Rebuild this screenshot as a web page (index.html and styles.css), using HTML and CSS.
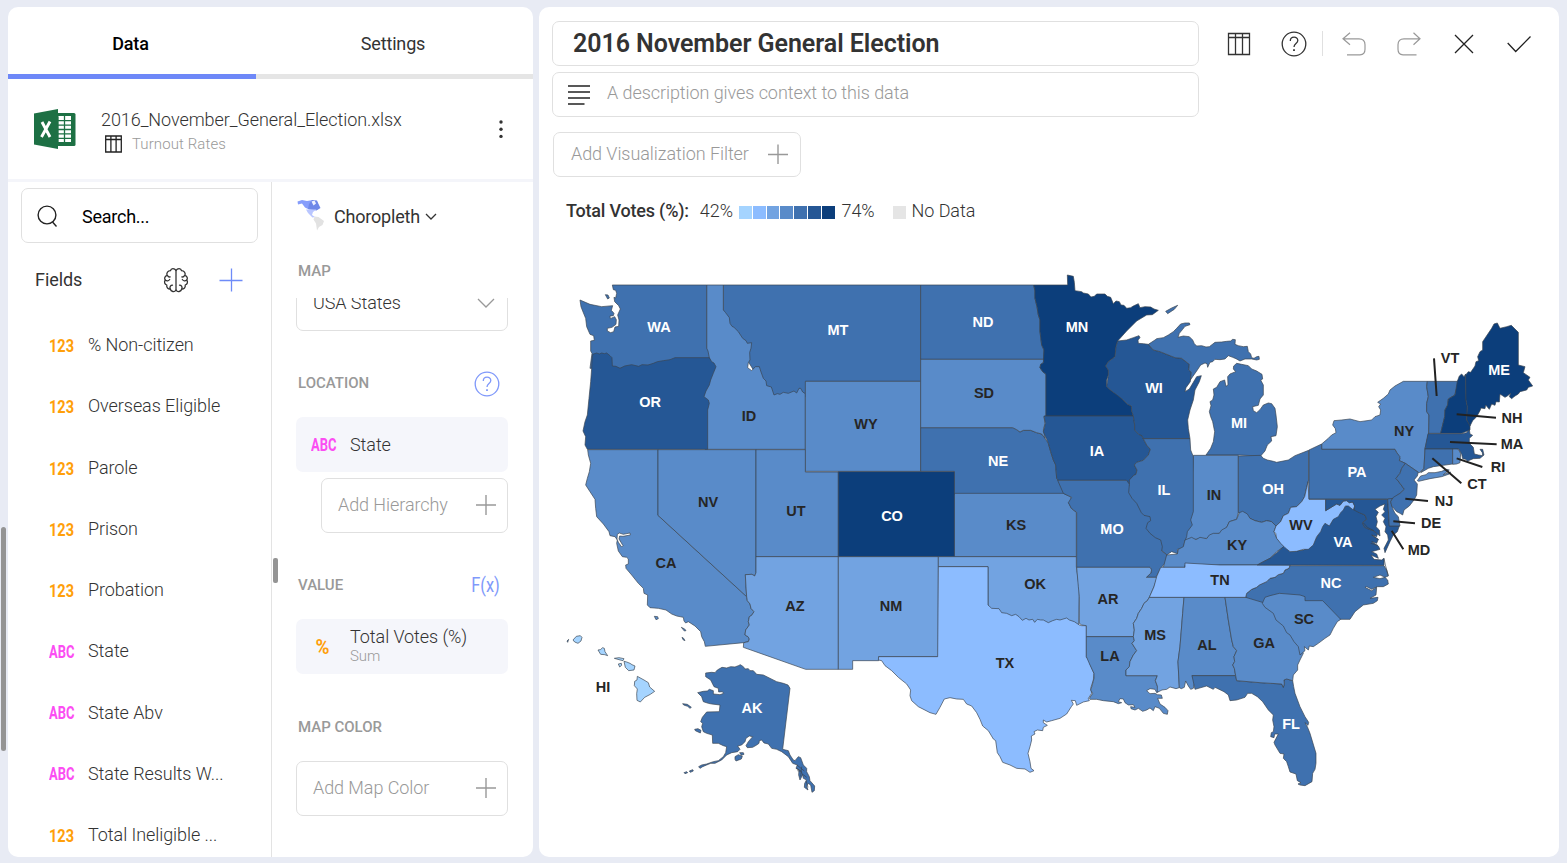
FILE: index.html
```html
<!DOCTYPE html>
<html lang="en">
<head>
<meta charset="utf-8">
<title>2016 November General Election</title>
<link rel="stylesheet" href="styles.css">
</head>
<body>
<div class="page-scroll"></div>
<div class="app">
  <aside class="side">
    <nav class="tabs">
      <div class="tab tab-active">Data</div>
      <div class="tab">Settings</div>
    </nav>
    <section class="source">
      <svg class="excel" width="42" height="40" viewBox="0 0 42 40">
        <rect x="20" y="4" width="21.5" height="33" rx="1.5" fill="#1d7044"/>
        <path d="M24 7h13v26H24z" fill="#fff"/>
        <path d="M24 7.200v26M30.500 7v26M24 11.700h13.500M24 16.100h13.500M24 20.500h13.500M24 24.900h13.500M24 29.300h13.500" stroke="#1d7044" stroke-width="1.300"/>
        <path d="M0 4.500 24 0v40L0 35.500z" fill="#1d7044"/>
        <path d="M8 13l8 15M16 12.500 7.500 28" stroke="#fff" stroke-width="2.900"/>
      </svg>
      <div class="source-text">
        <div class="source-name">2016_November_General_Election.xlsx</div>
        <div class="source-sheet">
          <svg width="17" height="18" viewBox="0 0 17 18" fill="none" stroke="#222" stroke-width="1.300"><path d="M.7 1h15.600v16H.7zM.7 4.500h15.600M5.900 1v16M11.100 1v16"/></svg>
          <span>Turnout Rates</span>
        </div>
      </div>
      <svg class="more" width="6" height="20" viewBox="0 0 6 20" fill="#333"><circle cx="3" cy="3" r="1.700"/><circle cx="3" cy="10.200" r="1.700"/><circle cx="3" cy="17.400" r="1.700"/></svg>
    </section>
    <div class="columns">
      <section class="fields">
        <div class="search">
          <svg width="22" height="24" viewBox="0 0 22 24" fill="none" stroke="#222" stroke-width="1.400"><circle cx="10" cy="11" r="8.900"/><path d="M15.500 18l4 4.500"/></svg>
          <span>Search...</span>
        </div>
        <div class="fields-head">
          <span>Fields</span>
          <svg class="brain" width="26" height="26" viewBox="0 0 26 26" fill="none" stroke="#333" stroke-width="1.300" stroke-linecap="round" stroke-linejoin="round">
            <path d="M13 3v20M13 3.500C11.500 1 8 1 7.500 3.700 4.800 3.800 3.300 6 4 8.300 1.700 9.200 1 11.500 2.300 13 .8 15 1.600 17.300 3.800 18c-.5 2.500 1.200 4 3.400 4C8 24.800 11.500 25.500 13 23"/>
            <path d="M13 3.500C14.500 1 18 1 18.500 3.700c2.700.1 4.200 2.300 3.500 4.600 2.300.9 3 3.200 1.700 4.700 1.500 2 .7 4.300-1.500 5 .5 2.500-1.200 4-3.400 4-.8 2.800-4.300 3.500-5.800 1"/>
            <path d="M4.500 8.500c.5 1.200 1.600 1.700 2.700 1.400M2.500 13.200c1.300 1 3.200.8 4.200-.7M7.200 22c-.8-2 .3-3.800 2.300-3.800M21.500 8.500c-.5 1.200-1.600 1.700-2.700 1.400M23.500 13.200c-1.300 1-3.200.8-4.200-.7M18.800 22c.8-2-.3-3.800-2.300-3.800"/>
          </svg>
          <svg class="add" width="24" height="24" viewBox="0 0 24 24" stroke="#6e8bf8" stroke-width="1.300"><path d="M.5 12.500h23M12.500 .5v23"/></svg>
        </div>
        <ul class="field-list">
          <li><b class="num">123</b><span>% Non-citizen</span></li>
          <li><b class="num">123</b><span>Overseas Eligible</span></li>
          <li><b class="num">123</b><span>Parole</span></li>
          <li><b class="num">123</b><span>Prison</span></li>
          <li><b class="num">123</b><span>Probation</span></li>
          <li><b class="abc">ABC</b><span>State</span></li>
          <li><b class="abc">ABC</b><span>State Abv</span></li>
          <li><b class="abc">ABC</b><span>State Results W...</span></li>
          <li><b class="num">123</b><span>Total Ineligible ...</span></li>
        </ul>
      </section>
      <section class="config">
        <div class="grip"></div>
        <div class="viz-type">
          <svg width="28" height="32" viewBox="0 0 28 32">
            <path d="M.5 2.500 5 1l5 1 6-1 4 2 2 4-2 4-8-.5-4-2-3-4-4 1z" fill="#869dfb"/>
            <path d="M12 5l3-4 5 .5 1.500 3.500 2 4-4 2.500L11 10z" fill="#6f88e8"/>
            <path d="M14.500 2.500l3-1 1.500 3-2.500 2z" fill="#eef1ff"/>
            <path d="M9 10.500h10.500L16 13l-1 3 3 2-2.500.5L11 14z" fill="#b9c6ff"/>
            <path d="M17.500 17.500l4 .5 5.500 4-1.500 4-3.500 2-2 3.500-1-7-2.500-4z" fill="#e2e2e2"/>
          </svg>
          <span>Choropleth</span>
          <svg class="caret" width="12" height="8" viewBox="0 0 12 8" fill="none" stroke="#333" stroke-width="1.300"><path d="M1 1l5 5 5-5"/></svg>
        </div>
        <h3 class="label-map">MAP</h3>
        <div class="config-scroll">
          <div class="box select"><span>USA States</span><svg width="18" height="10" viewBox="0 0 18 10" fill="none" stroke="#999" stroke-width="1.300"><path d="M1 1l8 8 8-8"/></svg></div>
          <div class="section-head location"><h3>LOCATION</h3>
            <svg width="26" height="26" viewBox="0 0 26 26" fill="none" stroke="#7f98fa" stroke-width="1.300"><circle cx="13" cy="13" r="11.800"/><path d="M9.300 10c0-5 7.500-5 7.500-.5 0 3-3.800 3.200-3.800 6.500"/><path d="M13 18.200v1.800" stroke-width="1.800"/></svg>
          </div>
          <div class="pill"><b class="abc">ABC</b><span>State</span></div>
          <div class="box hierarchy"><span>Add Hierarchy</span><svg class="plus" width="20" height="20" viewBox="0 0 20 20"><path d="M0 10h20M10 0v20"/></svg></div>
          <div class="section-head value"><h3>VALUE</h3><span class="fx">F(x)</span></div>
          <div class="pill"><b class="pct">%</b><div class="measure"><span>Total Votes (%)</span><small>Sum</small></div></div>
          <div class="section-head color"><h3>MAP COLOR</h3></div>
          <div class="box"><span>Add Map Color</span><svg class="plus" width="20" height="20" viewBox="0 0 20 20"><path d="M0 10h20M10 0v20"/></svg></div>
        </div>
      </section>
    </div>
  </aside>

  <main class="main">
    <header class="header">
      <div class="inputs">
        <div class="title">2016 November General Election</div>
        <div class="description">
          <svg width="22" height="20" viewBox="0 0 22 20" stroke="#222" stroke-width="1.500"><path d="M0 1h22M0 7h22M0 13h22M0 19h16.500"/></svg>
          <span>A description gives context to this data</span>
        </div>
      </div>
      <div class="toolbar">
        <div class="tool"><svg width="24" height="24" viewBox="0 0 24 24" stroke="#333" stroke-width="1.300"><path d="M1.500 1.500h21v21h-21zM1.500 5.500h21M8.500 1.500v21M15.500 1.500v21"/></svg></div>
        <div class="tool"><svg width="26" height="26" viewBox="0 0 26 26" stroke="#333" stroke-width="1.300"><circle cx="13" cy="13" r="11.800"/><path d="M9.300 10c0-5 7.500-5 7.500-.5 0 3-3.800 3.200-3.800 6.500"/><path d="M13 18.200v1.800" stroke-width="1.800"/></svg></div>
        <i class="divider"></i>
        <div class="tool"><svg width="24" height="24" viewBox="0 0 24 24" stroke="#999" stroke-width="1.200"><path d="M8 .8 1 6.800l7 6M1 6.800h16c4 0 6 2.200 6 6v4.500c0 4-2 5.500-5 5.500H5"/></svg></div>
        <div class="tool"><svg width="24" height="24" viewBox="0 0 24 24" stroke="#999" stroke-width="1.200"><path d="M16.500 .8l6.500 6-6.500 6M23 6.800H7c-4 0-6 2.200-6 6v4.500c0 4 2 5.500 5 5.500h13.500"/></svg></div>
        <div class="tool"><svg width="20" height="20" viewBox="0 0 20 20" stroke="#222" stroke-width="1.300"><path d="M1 1l18 18M19 1L1 19"/></svg></div>
        <div class="tool"><svg width="24" height="18" viewBox="0 0 24 18" stroke="#222" stroke-width="1.300"><path d="M.7 8l8 8.500L23.500 1.500"/></svg></div>
      </div>
    </header>
    <div class="filter"><span>Add Visualization Filter</span><svg class="plus" width="20" height="20" viewBox="0 0 20 20"><path d="M0 10.500h20M10 .5v20"/></svg></div>
    <div class="legend">
      <b>Total Votes (%):</b>
      <span class="legend-min">42%</span>
      <div class="swatches"><i class="s1"></i><i class="s2"></i><i class="s3"></i><i class="s4"></i><i class="s5"></i><i class="s6"></i><i class="s7"></i></div>
      <span class="legend-max">74%</span>
      <i class="nodata"></i>
      <span>No Data</span>
    </div>
    <svg class="map" width="1020" height="617" viewBox="539 240 1020 617">
      <!-- Northwest -->
      <g transform="translate(570 265) scale(.33333)">
        <path class="c5" d="M460 60H1052V349H707V395H600L460 170Z"/>
        <path class="c4" d="M410 60H460V135L466 142 478 158 480 175 486 184 492 187 505 200 518 220 528 227 532 235 545 233 543 250 539 262 540 285 535 293 533 308 545 317 556 305 568 305 572 318 580 340 588 348 590 362 604 366 612 390 622 386 630 388 640 382 655 385 672 378 680 384 687 370 692 370 698 381 706 386V553H405L395 400 410 270Z"/>
        <path class="c5" d="M127 60H410V250L414 258 418 278 425 310H60L66 265 62 258 62 228 73 226 71 212 60 208 50 185 47 160 38 138 33 125 30 105 60 118 95 125 128 122 124 136 132 145 130 152 120 153 121 161 134 155 139 164 138 178 126 187 112 190 112 198 122 203 131 200 135 186 146 184 147 165 143 150 151 132 146 122 134 110 132 97 137 99 140 85 137 76 130 74Z"/>
        <path class="c5" d="M106 89l8 1 4 9-5 3z"/>
        <path class="c6" d="M68 268L80 264 88 267 95 264 103 266 110 264 120 272 126 278 127 303 138 304 150 310 164 303 185 299 206 304 216 299 234 300 250 295 262 290 280 287 300 284 315 278H418L425 290 432 294 438 305 430 325 422 345 418 360 408 378 402 395 415 405 418 415 413 435V553H52L45 540 47 515 39 498 45 470 52 450 57 400 62 350 65 310 66 285Z"/>
        <path class="c4" d="M706 349H1052V619H706Z"/>
      </g>
      <!-- West -->
      <g transform="translate(560 440) scale(.33333)">
        <path class="c4" d="M83 29H294V226L560 470 562 482 570 492 573 505 582 515 575 526 568 530 565 545 568 555 557 570 555 585 564 590 568 597 565 605 551 608 436 619 433 605 425 590 422 575 405 558 385 545 377 549 372 543 370 532 350 528 335 522 318 510 295 505 270 503 262 495 263 465 252 460 250 445 235 430 215 405 198 385 197 375 205 372 205 357 200 352 187 350 175 333 170 310 172 300 165 290 150 287 147 275 130 252 110 230 107 205 105 178 90 155 77 135 82 115 88 95 92 70 85 45Z"/>
        <path class="water" d="M172 283l6-4 12 4 20-4 1 6-22 4-10-1-2 9 12 20-4 4-10-14-4-10z"/>
        <path class="c4" d="M283 529l10 1 2 6-7 3zM364 562l10 5 4 5-5 1zM366 592l5 3 4 7-6-3zM21 603l5-5-3 9z"/>
        <path class="c4" d="M294 29H588V398L584 408 576 403 556 404 558 440 560 470 294 226Z"/>
        <path class="c4" d="M588 29H736V96H835V350H588Z"/>
        <path class="c3" d="M588 350H835V688H737L550 622 551 608 565 605 568 597 564 590 555 585 557 570 568 555 565 545 568 530 575 526 582 515 573 505 570 492 562 482 560 470 558 440 556 404 576 403 584 408 588 398Z"/>
        <path class="c5" d="M437 699L455 697 465 698 472 690 486 682 500 684 512 680 525 681 535 677 541 674 550 680 555 687 565 686 570 692 580 692 590 703 610 705 650 725 670 730 684 735 690 745 668 928 685 932 690 945 700 960 705 962 715 950 722 953 730 975 740 985 740 995 748 1010 750 1022 764 1038 763 1052 756 1057 752 1035 744 1030 740 1038 744 1050 733 1042 734 1030 740 1020 730 1015 728 1004 720 1020 716 1005 717 990 708 985 712 975 698 970 685 950 665 935 650 928 635 925 625 912 612 909 605 900 598 902 597 910 590 915 578 922 562 923 558 917 565 905 578 890 568 888 558 895 555 905 545 915 533 918 540 928 533 935 515 938 500 945 485 960 465 970 452 970 440 975 428 980 420 985 416 980 425 975 440 972 460 965 475 962 490 950 497 938 500 920 490 917 475 910 458 910 457 885 440 880 430 875 425 860 428 850 422 845 427 832 440 816 478 815 480 795 455 792 445 790 430 785 425 770 413 758 430 754 442 753 448 748 460 752 460 762 480 764 491 760 487 755 476 756 475 745 462 740 452 720 437 710Z"/>
        <path class="c5" d="M368 791l14 2 12 9-4 3-7-6-12-4zM404 868l10-2 9 5-2 8-15-7zM525 950l10-6 12 5-3 8-16 6-3-5zM539 938l11 0 2 5-8 3zM388 993l10-4 2 4-9 4zM372 998l8-3 3 3-8 3z"/>
        <path class="inlets" d="M711 975l12 10 10 8M709 985l14 8 5 12M712 992l10 2M725 980l-3 30M730 1004l10 8M738 1022l6 20"/>
        <path class="c1" d="M39 600l10-11 12-2 5 5-3 11-9 7-10-4zM114 630l7-1 7-6 5 2 2 10 8 12-9-3-12-1zM163 655l14-2 15 3-3 6-12-3zM175 672l9-2 1 6-6 5zM192 664l8 2 10 4 6 4 9 4-3 12-16 2-10-10zM232 709l20 11 13 8 4 13 15 13-13 9-17 9-13 14-10-5-1-20 2-14-9-10 1-13 7-4z"/>
      </g>
      <!-- Upper midwest -->
      <g transform="translate(860 265) scale(.33333)">
        <path class="c5" d="M182 60H521L525 78 525 100 531 125 535 150 540 165 540 200 545 240 552 255V283H182Z"/>
        <path class="c5" d="M182 488H458L470 494 480 501 490 496 512 496 530 503 545 507 555 520 565 535 572 560 580 585 587 600 590 640 600 655 608 672 622 688H283V619H182Z"/>
        <path class="c4" d="M182 283H552L550 293 542 298 540 308 548 320 558 328V453L552 455 555 475 550 495 556 520 545 507 530 503 512 496 490 496 480 501 470 494 458 488H182Z"/>
        <path class="c7" d="M521 60H623L622 30 640 34 643 52 645 77 665 80 670 84 685 87 693 96 703 94 710 87 735 87 742 94 752 97 760 116 768 108 778 110 783 120 792 121 800 130 812 128 820 123 835 116 840 128 855 125 872 126 882 132 895 136 877 149 860 150 830 168 800 198 773 228 768 245 765 275 745 290 737 303 745 315 745 330 740 345 740 365 760 382 770 387 790 405 803 418 814 423 815 438 820 453H558V328L548 320 540 308 542 298 550 293 552 255 545 240 540 200 540 165 535 150 531 125 525 100 525 78Z"/>
        <path class="c6" d="M552 453H820L824 480 824 495 836 508 846 512 850 522 860 540 871 553 865 570 850 586 830 592 823 600 831 615 828 628 820 632 820 645 808 658 798 646H595L590 640 587 600 580 585 572 560 565 535 550 500 556 475Z"/>
      </g>
      <!-- Great Lakes -->
      <g transform="translate(1130 265) scale(.33333)">
        <path class="c6" d="M-37 228L-10 225 10 218 27 212 30 218 24 225 25 235 40 236 55 238 70 255 90 260 110 268 135 278 155 280 165 288 178 298 176 315 184 322 182 340 181 350 168 368 165 380 178 372 190 352 200 335 214 332 208 350 195 375 190 405 180 435 173 465 175 490 180 521H40L36 512 26 508 14 495 14 480 10 453 5 438 4 423 -7 418 -20 405 -50 382 -70 365 -65 330 -65 315 -73 303 -65 290 -45 275 -42 245Z"/>
        <path class="c5" d="M55 238L75 225 80 221 100 218 115 210 130 200 140 190 152 177 165 174 178 174 180 179 165 184 158 193 148 205 144 217 160 213 178 215 188 225 193 236 200 243 215 242 228 246 238 245 255 232 275 231 290 229 302 228 308 223 316 224 315 238 325 242 340 245 352 244 355 260 362 267 365 278 372 280 380 275 387 274 388 283 380 285 365 282 345 282 330 288 318 281 308 277 295 272 285 282 270 284 255 283 248 290 240 292 233 307 231 296 225 294 212 300 200 318 188 335 181 345 184 322 176 315 178 298 165 288 155 280 135 278 110 268 90 260 70 255Z"/>
        <path class="c5" d="M107 139L125 129 143 121 133 133 113 146Z"/>
        <path class="c5" d="M320 295L311 303 310 312 317 320 300 327 293 335 294 360 288 364 284 345 270 350 260 367 250 372 252 390 248 405 240 410 243 422 238 440 242 455 248 470 254 500 250 530 242 550 228 570H325L392 573 405 558 412 540 425 528 423 515 438 512 442 485 438 450 435 430 425 416 415 414 400 420 390 434 380 443 370 437 368 425 385 421 390 402 400 390 400 360 392 345 398 342 396 328 380 318 365 312 355 302 335 298Z"/>
      </g>
      <!-- Central -->
      <g transform="translate(830 460) scale(.33333)">
        <path class="c4" d="M373 100H700L722 110 725 120 716 128 724 145 739 157V290H373Z"/>
        <path class="c7" d="M25 35H373V290H25Z"/>
        <path class="c3" d="M25 290H325V590H146V602H68V628H25Z"/>
        <path class="c3" d="M325 290H739V320L746 370 748 388 746 500H474V320H325Z"/>
        <path class="c2" d="M325 320H474V435L485 445 507 446 515 458 530 460 545 467 557 463 567 470 577 481 588 475 597 480 608 478 614 487 622 478 632 480 640 480 655 488 668 482 680 478 690 480 710 474 718 480 733 485 748 495 755 497 769 497V592L778 600 781 615 792 640 790 660 782 685 785 700 775 715 778 722 760 726 740 736 736 722 724 721 730 732 724 740 710 762 690 775 665 782 650 786 640 780 640 788 652 796 640 802 638 812 622 810 612 815 615 822 604 828 605 840 600 860 594 880 600 905 603 925 612 932 600 937 585 927 560 925 540 915 518 907 510 890 502 878 497 842 490 837 475 812 458 798 450 778 440 758 425 738 410 732 400 718 380 717 360 713 343 717 330 742 318 763 300 758 265 740 245 722 240 707 242 690 230 672 205 652 185 632 165 617 155 602 145 600 146 590H323Z"/>
      </g>
      <!-- South -->
      <g transform="translate(1070 480) scale(.33333)">
        <path class="c4" d="M370 -74H505V98L500 118 478 125 470 142 448 160 430 162 410 175 375 178 345 182 340 160 362 100Z"/>
        <path class="c5" d="M220 -124H360L362 -90 370 -70V95L362 120 367 135 352 155 350 170 345 182 340 205 322 208 325 222 305 215 290 225 230 170 170 35 178 13 178 0 190 -13 190 -13 198 -17 201 -30 193 -45 200 -53 220 -59 235 -75 241 -92 230 -105Z"/>
        <path class="c5" d="M-37 1H170L178 13 176 38 186 55 200 70 214 98 222 106 240 110 242 122 233 128 228 145 240 160 256 173 272 180 277 200 275 213 290 224 288 245 275 262 265 278 258 292H229L242 280 245 270 240 262H20V97L4 85 -5 68 5 52 -10 45 -20 40Z"/>
        <path class="c5" d="M505 -72L572 -74 580 -65 592 -60 610 -56 620 -53 655 -60 675 -73 716 -89V0L708 30 704 50 695 65 680 80 662 82 655 100 640 107 632 125 618 138 605 125 590 122 575 127 555 122 540 115 525 98 505 98Z"/>
        <path class="c3" d="M20 262H240L245 270 242 280 229 292H262L252 320 238 352 232 362 222 370 215 385 205 400 200 415 190 430 193 450 190 470H49V437L35 435 28 430V350L25 320Z"/>
        <path class="c4" d="M49 470H190L193 482 186 490 200 512 190 525 180 545 178 560 168 570 168 587H262L256 602 262 618 268 632 260 638 255 628 240 626 230 632 240 641 255 640 262 644 274 645 277 655 263 655 270 672 285 682 294 692 292 703 280 700 268 685 255 680 250 692 240 684 230 690 218 694 205 685 195 690 183 686 182 680 195 682 190 674 175 675 165 668 160 657 150 656 145 665 155 668 145 671 130 665 100 662 80 658 60 658 58 655 68 640 62 630 66 618 72 595 72 580 60 555 49 530Z"/>
        <path class="c3" d="M238 352H342L338 400 330 500 324 545 328 623 318 626 300 621 290 628 276 630 262 637 262 618 256 602 262 587H168L168 570 178 560 180 545 190 525 200 512 186 490 193 482 190 470 193 450 190 430 200 415 205 400 215 385 222 370 232 362Z"/>
        <path class="c4" d="M342 352H465L475 420 485 480 490 500 500 512 492 530 494 545 488 555 493 565 497 587H366L375 605 370 625 362 628 355 618 347 603 343 622 334 626 328 623 324 545 330 500 338 400Z"/>
        <path class="c5" d="M366 587H497L500 602 570 608 635 612 640 622 643 612 642 600 650 597 668 602 671 620 675 640 690 680 705 710 716 727 714 736 705 728 712 740 720 760 738 820 738 850 735 868 728 880 726 905 705 917 690 915 684 912 693 908 682 902 678 882 660 876 655 860 650 845 640 835 642 822 630 820 615 795 612 787 625 762 614 762 612 773 602 770 604 758 610 755 612 740 608 720 610 705 595 690 578 665 562 650 545 640 533 640 525 652 500 660 480 662 475 645 462 635 435 622 430 628 410 618 375 628Z"/>
        <path class="c4" d="M465 352H600L640 400 700 520 690 540 683 555 683 570 670 585 668 602 650 597 642 600 643 612 640 622 635 612 570 608 500 602 497 587 493 565 488 555 494 545 492 530 500 512 490 500 485 480 475 420Z"/>
        <path class="c5" d="M527 352L530 340 545 328 560 322 568 315 590 305 600 295 615 292 625 284 640 280 645 270 657 265 660 257H942L950 270 955 288 945 292 930 285 910 292 930 296 945 292 953 300 955 312 940 320 922 320 905 328 890 320 885 322 905 332 920 322 918 345 900 355 924 352 922 362 910 370 880 375 855 395 840 418 812 418 780 430 620 380Z"/>
        <path class="c4" d="M585 352L600 347 628 340 690 345 705 350 705 362H758L812 418 802 425 790 445 780 465 765 475 745 490 730 500 718 498 715 510 703 500 705 512 690 525 685 500 672 485 660 465 650 458 640 438 618 420 610 400 585 382 577 370Z"/>
        <path class="c4" d="M290 225L322 222 325 208 340 200 345 180 365 172 378 179 390 172 410 176 418 165 430 160 448 160 455 150 470 142 478 125 500 118 508 98 518 94 532 102 540 115 555 122 575 127 590 122 605 125 618 138 612 155 620 175 645 198 620 215 600 235 562 255H345L345 262H280Z"/>
        <path class="c2" d="M272 262H345V249L450 255H660L657 265 645 270 640 280 625 284 615 292 600 295 590 305 568 315 560 322 545 328 530 340 527 352H238L252 320 260 290Z"/>
        <path class="c6" d="M562 255L580 245 600 235 620 218 645 196 660 215 700 210 728 195 762 130 775 130 805 100 835 72 852 82 865 95 885 105 890 118 878 128 882 140 890 145 910 152 922 162 920 170 905 165 925 178 920 190 905 185 925 198 930 208 905 215 920 222 925 235 903 225 912 238 935 240 942 235 942 256Z"/>
        <path class="c2" d="M714 5L717 58H767V92L790 78 800 72 810 76 820 63 830 62 838 68 848 66 854 78 850 90 835 78 826 78 820 90 812 98 805 110 790 118 778 138 765 130 758 140 752 155 740 170 730 195 715 208 700 208 680 214 660 215 645 203 632 190 620 175 617 160 612 155 618 138 632 125 640 107 655 100 662 82 680 80 695 65 704 50Z"/>
        <path class="c6" d="M767 58H953L958 138H988L982 155 970 165 960 185 945 218 942 205 955 180 953 165 945 155 948 140 940 125 945 115 935 105 945 95 940 88 945 72 930 78 915 88 925 97 918 110 922 125 918 140 928 150 930 168 910 152 890 145 882 140 878 128 890 118 885 105 865 97 852 90 854 78 848 66 838 68 830 62 820 63 810 76 800 72 790 78 767 92Z"/>
        <path class="c5" d="M953 57L960 52 968 55 962 65 968 85 975 100 985 110 990 138H958Z"/>
        <path class="coast" d="M942 235l4 20 9 32M880 128l12 14 20 10M906 165l20 14M902 190l22 6"/>
      </g>
      <!-- Northeast -->
      <g transform="translate(1300 300) scale(.33333)">
        <path class="c4" d="M65 432L85 415 95 405 108 398 106 386 98 375 102 362 125 360 150 357 180 365 215 360 225 350 240 345 242 330 236 320 242 312 233 307 250 295 265 282 270 270 285 258 310 244H382L380 260 385 290 380 310 380 335 387 345 386 400 375 445 372 505 358 518 355 517 316 490 298 482 300 475 285 448H65Z"/>
        <path class="c4" d="M352 542L362 528 378 524 385 518 405 518 425 514 440 508 448 510 430 524 452 516 448 522 425 530 390 536 356 544Z"/>
        <path class="c5" d="M27 450L65 432V448H285L290 458 300 470 298 482 316 490 305 505 300 520 288 535 300 550 313 568 300 580 280 595 260 597H27Z"/>
        <path class="c5" d="M316 490L355 517 352 528 342 540 352 552 350 585 342 600 328 618 312 630 308 645 300 640 290 635 275 618 272 605 280 592 300 580 313 568 300 550 288 535 300 520 305 505Z"/>
        <path class="c5" d="M382 244H474L478 260 468 268 465 285 445 297 443 315 435 330 434 350 428 375 422 400H386L387 345 380 335 380 310 385 290 380 260Z"/>
        <path class="c7" d="M472 244L478 228 485 222 492 230 497 222 498 300 502 320 500 360 510 375 510 390 485 400H422L428 375 434 350 435 330 443 315 445 297 465 285 468 268Z"/>
        <path class="c7" d="M497 225L505 215 512 217 525 198 528 185 536 182 533 170 540 155 548 150 548 125 575 85 582 72 592 69 600 85 620 80 634 76 655 97V195L675 200 670 218 690 232 685 240 698 258 685 262 680 270 660 275 655 282 645 288 640 292 635 296 628 290 632 280 622 288 615 292 600 282 598 306 588 305 585 316 575 312 568 328 557 315 555 326 543 324 540 332 530 350 518 362 510 378 500 360 502 320 498 300Z"/>
        <path class="c6" d="M384 401H485L500 398 508 388 510 402 518 406 508 415 508 430 520 442 523 462 535 465 548 467 547 458 540 448 548 448 552 465 540 475 520 476 510 480 503 484 497 478 488 476 485 463 476 447H375Z"/>
        <path class="c5" d="M375 447H458V492L430 496 400 500 385 505 362 518 372 505Z"/>
        <path class="c4" d="M458 447H474L482 460 480 488 470 492 458 493Z"/>
        <path class="leaders" d="M402 175l8 113M470 343l118 10M450 426l140 7M470 475l77 26M397 475l87 75M316 596l68 7M280 664l65 6M275 692l35 56"/>
      </g>
      <g class="names light">
        <text x="659" y="332">WA</text><text x="838" y="335">MT</text><text x="650" y="407">OR</text><text x="983" y="327">ND</text><text x="1077" y="332">MN</text><text x="1154" y="393">WI</text><text x="1239" y="428">MI</text><text x="1097" y="456">IA</text><text x="998" y="466">NE</text><text x="892" y="521">CO</text><text x="1112" y="534">MO</text><text x="1164" y="495">IL</text><text x="1273" y="494">OH</text><text x="1357" y="477">PA</text><text x="1499" y="375">ME</text><text x="1343" y="547">VA</text><text x="1331" y="588">NC</text><text x="1291" y="729">FL</text><text x="752" y="713">AK</text>
      </g>
      <g class="names">
        <text x="749" y="421">ID</text><text x="866" y="429">WY</text><text x="984" y="398">SD</text><text x="708" y="507">NV</text><text x="796" y="516">UT</text><text x="666" y="568">CA</text><text x="795" y="611">AZ</text><text x="891" y="611">NM</text><text x="1016" y="530">KS</text><text x="1035" y="589">OK</text><text x="1108" y="604">AR</text><text x="1005" y="668">TX</text><text x="1110" y="661">LA</text><text x="1155" y="640">MS</text><text x="1207" y="650">AL</text><text x="1264" y="648">GA</text><text x="1304" y="624">SC</text><text x="1220" y="585">TN</text><text x="1237" y="550">KY</text><text x="1214" y="500">IN</text><text x="1301" y="530">WV</text><text x="1404" y="436">NY</text><text x="603" y="692">HI</text>
        <text x="1450" y="363">VT</text><text x="1512" y="423">NH</text><text x="1512" y="449">MA</text><text x="1498" y="472">RI</text><text x="1477" y="489">CT</text><text x="1444" y="506">NJ</text><text x="1431" y="528">DE</text><text x="1419" y="555">MD</text>
      </g>
    </svg>
  </main>
</div>
</body>
</html>
```
FILE: styles.css
```css
* { box-sizing: border-box; }
body {
  margin: 0;
  height: 863px;
  overflow: hidden;
  background: #e8ebf4;
  color: #333;
  font: 300 18px Roboto, sans-serif;
  letter-spacing: -.07px;
}
svg { display: block; flex: none; }
b, h3 { margin: 0; }

.page-scroll {
  position: absolute;
  left: 1px;
  top: 527px;
  width: 5px;
  height: 224px;
  border-radius: 3px;
  background: #949494;
}
.app { display: flex; gap: 6px; height: 863px; padding: 7px 8px 6px; }
.side, .main { background: #fff; border-radius: 10px; overflow: hidden; }
.side { width: 525px; flex: none; display: flex; flex-direction: column; }
.main { flex: 1; }

.tabs { display: flex; height: 72px; flex: none; }
.tab {
  flex: 1;
  padding: 6px 3px 0 0;
  border-bottom: 5px solid #e5e5e5;
  display: flex;
  align-items: center;
  justify-content: center;
  font-weight: 400;
  letter-spacing: -.15px;
}
.tab-active { flex: none; width: 248px; border-color: #6e88f8; color: #000; font-weight: 500; }

.source {
  display: flex;
  flex: none;
  height: 103px;
  padding: 0 29px 0 26px;
  border-bottom: 3px solid #f4f5fa;
}
.excel { margin-top: 30px; }
.source-text { flex: 1; padding: 30px 0 0 25px; }
.source-name { line-height: 22px; }
.source-sheet { display: flex; gap: 10px; padding: 4px 0 0 4px; line-height: 18px; font-size: 15px; letter-spacing: .1px; color: #999; }
.more { margin-top: 40px; }

.columns { display: flex; flex: 1; min-height: 0; }
.fields { width: 264px; flex: none; border-right: 1px solid #e3e3e3; padding: 6px 13px 0; overflow: hidden; }
.search {
  display: flex;
  align-items: center;
  height: 55px;
  border: 1px solid #e0e0e0;
  border-radius: 7px;
  padding: 1px 0 0 15px;
  gap: 23px;
  color: #000;
  font-weight: 400;
  letter-spacing: -.25px;
}
.fields-head { display: flex; align-items: center; height: 74px; padding: 0 15px 2px 14px; font-weight: 400; }
.fields-head svg { margin-top: 1px; }
.fields-head .brain { margin: 1px 30px 0 auto; }
.field-list { list-style: none; margin: -3px 0 0; padding: 0 0 0 28px; }
.field-list li { display: flex; align-items: center; height: 61.25px; white-space: nowrap; }
.field-list span { margin-left: -1px; }
.num, .abc, .pct { width: 40px; flex: none; font-size: 18px; font-weight: 700; letter-spacing: 0; transform-origin: left center; }
.num { color: #ff9f0a; padding-top: 2px; transform: scaleX(.81); }
.abc { color: #fb4df3; padding-top: 1px; transform: scaleX(.72); }
.pct { color: #ff9f0a; font-size: 21px; transform: scaleX(.9); }

.config { flex: 1; position: relative; display: flex; flex-direction: column; }
.grip { position: absolute; left: 1px; top: 376px; width: 5px; height: 25px; border-radius: 2px; background: #949494; }
.viz-type { display: flex; align-items: center; height: 69px; padding-left: 25px; font-weight: 400; letter-spacing: -.2px; }
.viz-type span { margin: 0 5px 0 9px; }
.viz-type svg:first-child { margin-top: -3px; }
h3 { font-size: 15px; font-weight: 500; color: #999; line-height: 20px; letter-spacing: 0; }
.label-map { height: 47px; padding: 10px 0 0 26px; }
.config-scroll { flex: 1; overflow: hidden; padding: 0 25px 0 24px; }
.box {
  height: 55px;
  border: 1px solid #e0e0e0;
  border-radius: 7px;
  display: flex;
  align-items: center;
  justify-content: space-between;
  padding: 0 11px 2px 16px;
  color: #999;
}
.select { margin-top: -22px; color: #333; padding-right: 12px; }
.plus { stroke: #999; stroke-width: 1.4; }
.section-head { display: flex; align-items: center; justify-content: space-between; padding: 0 8px 0 2px; }
.section-head h3 { margin-top: -2px; }
.location { height: 86px; padding-top: 20px; }
.value { height: 86px; padding-top: 20px; }
.color { height: 87px; padding-top: 20px; }
.fx { margin-top: -2px; font-size: 20px; font-weight: 400; color: #8099fa; letter-spacing: 0; transform: scaleX(.82); transform-origin: right center; }
.pill { height: 55px; border-radius: 7px; background: #f5f6fb; display: flex; align-items: center; padding: 0 0 1px 15px; }
.pill span, .pill small { margin-left: -1px; }
.pill .pct { padding: 2px 0 0 5px; }
.measure { display: flex; flex-direction: column; line-height: 20px; }
.measure small { font-size: 15px; line-height: 18px; color: #999; }
.hierarchy { margin: 6px 0 0 25px; }

.header { display: flex; padding: 14px 12px 0 13px; }
.inputs { width: 647px; flex: none; }
.title, .description { height: 45px; border: 1px solid #e0e0e0; border-radius: 7px; display: flex; align-items: center; }
.title { padding-left: 20px; font-size: 25px; font-weight: 600; letter-spacing: -.05px; }
.description { margin-top: 6px; padding: 0 0 4px 15px; gap: 17px; color: #999; }
.description svg { margin-top: 5px; }
.toolbar { display: flex; padding-left: 12px; height: 45px; align-items: center; }
.tool { width: 55px; display: flex; justify-content: center; fill: none; }
.divider { width: 1px; height: 25px; margin: 0 3px 0 1px; background: #e0e0e0; }
.filter {
  display: flex;
  align-items: center;
  justify-content: space-between;
  width: 248px;
  height: 45px;
  margin: 15px 0 0 14px;
  padding: 0 12px 2px 17px;
  border: 1px solid #e0e0e0;
  border-radius: 7px;
  color: #999;
}
.legend { display: flex; align-items: center; height: 63px; padding: 4px 0 0 27px; }
.legend b { font-weight: 500; letter-spacing: -.2px; }
.legend-min { margin: 0 6px 0 11px; }
.swatches { display: flex; gap: 1px; padding-top: 3px; }
.swatches i { width: 12.8px; height: 13px; }
.legend-max { margin: 0 18px 0 7px; }
.nodata { width: 13px; height: 13px; margin: 3px 6px 0 0; background: #e5e5e5; }
.s1 { background: #a5d4ff; }
.s2 { background: #8cbcff; }
.s3 { background: #72a3e1; }
.s4 { background: #598bc9; }
.s5 { background: #3f71af; }
.s6 { background: #255795; }
.s7 { background: #0c3e7b; }

.map path { stroke: #39434f; stroke-opacity: .75; stroke-width: .9px; stroke-linejoin: round; vector-effect: non-scaling-stroke; }
.c1 { fill: #a5d4ff; }
.c2 { fill: #8cbcff; }
.c3 { fill: #72a3e1; }
.c4 { fill: #598bc9; }
.c5 { fill: #3f71af; }
.c6 { fill: #255795; }
.c7 { fill: #0c3e7b; }
.water { fill: #fff; }
.map .inlets, .map .coast { fill: none; }
.map .leaders { fill: none; stroke: #222; stroke-opacity: 1; stroke-width: 2px; }
.names { font: 700 14.5px "Liberation Sans", Arial, sans-serif; letter-spacing: 0; fill: #262626; text-anchor: middle; }
.light { fill: #fff; }
```
